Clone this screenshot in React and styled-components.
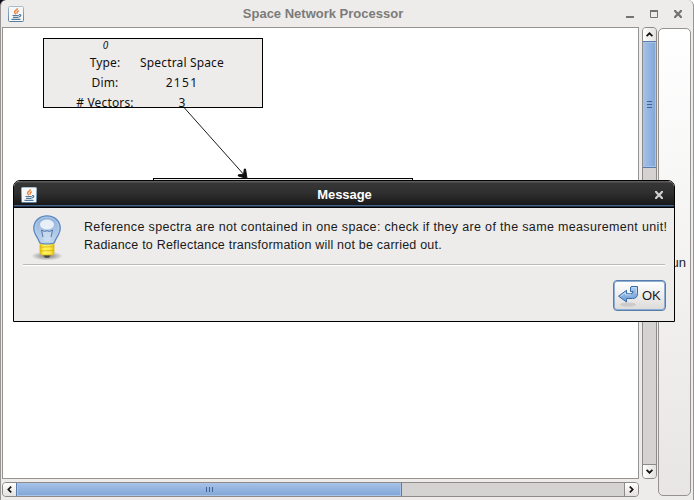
import React from 'react';
import styled, { createGlobalStyle } from 'styled-components';

const GlobalStyle = createGlobalStyle`
  * { box-sizing: border-box; }
  html, body { margin: 0; height: 100%; overflow: hidden; background: linear-gradient(90deg, #0b0e18 50%, #fff 50%); }
  svg { display: block; flex: none; }
`;

const Window = styled.div`
  position: relative;
  width: 694px;
  height: 500px;
  overflow: hidden;
  display: flex;
  flex-direction: column;
  background: #edeceb;
  border: solid #989694;
  border-width: 0 1px;
  border-radius: 6px 6px 0 0;
  font-family: 'Liberation Sans', Arial, sans-serif;
  color: #1a1a1a;
`;

const TitleBar = styled.header`
  display: grid;
  grid-template-columns: 56px 1fr 104px;
  align-items: center;
  height: 27px;
  flex: none;
  padding: 1px 7px 0;
`;

const Title = styled.h1`
  margin: 0;
  text-align: center;
  white-space: nowrap;
  font-size: 13px;
  line-height: 16px;
  font-weight: 700;
  letter-spacing: ${(p) => (p.$light ? '-0.05px' : '0')};
  color: ${(p) => (p.$light ? '#fff' : '#7c7b79')};
`;

const WindowControls = styled.div`
  display: flex;
  justify-content: flex-end;
  align-items: center;
  gap: 16px;
  padding-right: 4px;
`;

const Workspace = styled.div`
  display: grid;
  grid-template-columns: 637px 18px 33px;
  grid-template-rows: 452px 15px;
  row-gap: 3px;
  padding-left: 1px;
  flex: none;
`;

const Canvas = styled.main`
  position: relative;
  border: 1px solid #979491;
  background: #fff;
  overflow: hidden;
`;

const Node = styled.div`
  position: absolute;
  left: ${(p) => p.$x}px;
  top: ${(p) => p.$y}px;
  width: ${(p) => p.$w}px;
  height: ${(p) => p.$h}px;
  border: 1px solid #000;
  background: #edeceb;
`;

const NodeGrid = styled.div`
  display: grid;
  grid-template-columns: 58px 86px;
  column-gap: 5px;
  grid-template-rows: 14px 20px 20px 17px;
  padding-left: 32px;
  text-align: center;
  font: 12px/20px 'Noto Sans', sans-serif;
  white-space: nowrap;
  color: #111;
`;

const NodeId = styled.span`
  grid-column: 1 / 3;
  width: 59px;
  font: italic 10px/12px 'Noto Sans', sans-serif;
`;

const Value = styled.span`
  letter-spacing: ${(p) => (p.$wide ? '1.3px' : '0.15px')};
`;

const Connector = styled.svg`
  position: absolute;
  left: 177px;
  top: 78px;
`;

const ScrollTrack = styled.div`
  display: flex;
  flex-direction: ${(p) => (p.$vertical ? 'column' : 'row')};
  width: ${(p) => (p.$vertical ? '15px' : '637px')};
  height: ${(p) => (p.$vertical ? '452px' : '15px')};
  border: 1px solid #8e8a87;
  border-radius: 4px;
  background: #d4d3d1;
  overflow: hidden;
  justify-content: space-between;
`;

const VerticalSlot = styled.div`
  margin-left: 3px;
`;

const ScrollButton = styled.div`
  width: 13px;
  height: 13px;
  flex: none;
  display: grid;
  place-items: center;
  background: linear-gradient(${(p) => (p.$vertical ? '90deg' : '180deg')}, #fff, #e3e1df);
  box-shadow: 0 0 0 1px #8e8a87;
`;

const Thumb = styled.div`
  position: relative;
  display: grid;
  place-items: center;
  flex: none;
  width: ${(p) => (p.$vertical ? '15px' : '386px')};
  height: ${(p) => (p.$vertical ? '127px' : '15px')};
  margin: ${(p) => (p.$vertical ? '0 -1px auto' : '-1px auto -1px 0')};
  border: 1px solid #587baa;
  box-shadow: inset 0 0 0 1px #a9c4e8;
  background: linear-gradient(${(p) => (p.$vertical ? '90deg' : '180deg')}, #a5c1e8, #80a6d6);
`;

const RunButton = styled.button`
  grid-row: 1 / 3;
  grid-column: 3;
  width: 33px;
  height: 468px;
  margin: 1px 0 0 1px;
  padding: 0 4px 0 0;
  display: flex;
  align-items: center;
  justify-content: flex-end;
  border: 1px solid #96928f;
  border-radius: 5px;
  background: linear-gradient(#fff, #e8e6e4);
  font: 13px 'Liberation Sans', sans-serif;
  color: #1a1a1a;
`;

const Dialog = styled.section`
  position: absolute;
  left: 12px;
  top: 180px;
  width: 662px;
  height: 142px;
  border: 1px solid #000;
  border-radius: 7px 7px 0 0;
  background: #edeceb;
  overflow: hidden;
`;

const DialogTitleBar = styled.header`
  display: grid;
  grid-template-columns: 60px 1fr 55px;
  align-items: center;
  height: 27px;
  padding: 1px 11px 0 7px;
  background: linear-gradient(#5b5b5a 0 1px, #363636 2px, #2f2f2f 12px, #191919 24px, #44618c 24px 25px, #000 26px);
`;

const CloseSlot = styled.div`
  display: flex;
  justify-content: flex-end;
`;

const DialogContent = styled.div`
  display: flex;
  height: 57px;
  margin: 0 9px;
  border-bottom: 1px solid #bcbab8;
  box-shadow: 0 1px #fff;
`;

const BulbSlot = styled.div`
  width: 61px;
  padding: 7px 0 0 7px;
  flex: none;
`;

const Message = styled.p`
  margin: 0;
  padding-top: 10px;
  font-size: 12.5px;
  line-height: 18px;
  white-space: nowrap;
`;

const Line = styled.span`
  display: block;
  letter-spacing: ${(p) => p.$spacing};
`;

const Actions = styled.footer`
  display: flex;
  justify-content: flex-end;
  padding: 15px 8px 0 0;
`;

const OkButton = styled.button`
  display: flex;
  align-items: center;
  gap: 3px;
  width: 53px;
  height: 31px;
  padding: 0 3px;
  border: 1px solid #587ead;
  border-radius: 4px;
  box-shadow: inset 0 0 0 1px #8fadd3;
  background: linear-gradient(#fff, #dddbd9);
  font: 13px 'Liberation Sans', sans-serif;
  letter-spacing: -0.2px;
  color: #1a1a1a;
`;

function JavaIcon() {
  return (
    <svg width="16" height="16" viewBox="0 0 16 16">
      <defs>
        <linearGradient id="java" x2="0" y2="1">
          <stop stopColor="#a9bdcc" />
          <stop offset="1" stopColor="#587fa3" />
        </linearGradient>
      </defs>
      <rect x=".5" y=".5" width="15" height="15" rx="1" fill="#f5f7f9" stroke="url(#java)" />
      <path d="M9.500 2.200C9.500 4 6 4.500 6.500 6.500l1.300 1.800M10.800 4.600C8.500 5.800 8.700 6.600 9.300 7.800" fill="none" stroke="#ed8740" strokeWidth="1.400" />
      <path d="M4.500 9.500h6.300M5 11.300h5.500M11 8.600c2.600-.4 2.300 2-.3 2.400M3.500 13.400h9" fill="none" stroke="#53799b" strokeWidth="1.200" />
    </svg>
  );
}

function CloseIcon({ color }) {
  return (
    <svg width="8" height="8" viewBox="0 0 8 8">
      <path d="M1 1l6 6M7 1L1 7" stroke={color} strokeWidth="2.3" />
      <path d="M0 .8h2M6 .8h2M0 7.200h2M6 7.200h2" stroke={color} strokeWidth="1.400" />
    </svg>
  );
}

function Arrow({ angle }) {
  return (
    <svg width="9" height="9" viewBox="0 0 9 9">
      <path transform={`rotate(${angle} 4.5 4.5)`} d="M1.6 6.2L4.5 3.3l2.9 2.9" fill="none" stroke="#111" strokeWidth="1.7" />
    </svg>
  );
}

function Grip({ vertical }) {
  return (
    <svg width={vertical ? 5 : 7} height={vertical ? 7 : 5} shapeRendering="crispEdges">
      <path
        d={vertical ? 'M0 .5h5M0 3.5h5M0 6.5h5' : 'M.5 0v5M3.5 0v5M6.5 0v5'}
        stroke="#3e6399"
      />
    </svg>
  );
}

function Bulb() {
  return (
    <svg width="34" height="46" viewBox="0 0 34 46">
      <defs>
        <linearGradient id="glass" x2="0" y2="1">
          <stop stopColor="#8eafd9" />
          <stop offset="1" stopColor="#c4d8f0" />
        </linearGradient>
        <linearGradient id="brass">
          <stop stopColor="#e7c214" />
          <stop offset=".3" stopColor="#fff45e" />
          <stop offset=".7" stopColor="#fce94f" />
          <stop offset="1" stopColor="#e9c30f" />
        </linearGradient>
        <radialGradient id="shade">
          <stop stopColor="#000" stopOpacity=".5" />
          <stop offset="1" stopColor="#000" stopOpacity="0" />
        </radialGradient>
      </defs>
      <ellipse cx="17" cy="41" rx="16" ry="4.500" fill="url(#shade)" />
      <path d="M13 39.500h8l-2 3.200h-4z" fill="#454846" />
      <path d="M10 28h14v10l-2 2H12l-2-2z" fill="url(#brass)" stroke="#dcb60a" strokeWidth=".8" />
      <path d="M10 32.200l14-.6M10 36l14-.6" stroke="#d2ac08" strokeWidth=".7" />
      <path d="M17 .8C9.500.8 3.800 6 3.800 13.400c0 5.600 4.200 9 5.700 14 1.500 2 13.500 2 15 0 1.500-5 5.700-8.400 5.700-14C30.200 6 24.500.8 17 .8z" fill="url(#glass)" stroke="#5d89c2" strokeWidth="1.300" />
      <path d="M17 2.200C10.300 2.200 5.300 6.900 5.300 13.400c0 4.900 3.900 8.100 5.400 13 1.500 1.300 11.100 1.300 12.600 0 1.500-4.900 5.400-8.100 5.400-13C28.700 6.900 23.700 2.200 17 2.200z" fill="none" stroke="#b6cee9" strokeWidth=".8" />
      <path d="M14 26.500l-2.200-11.500 3 1.500 2.200-.8 2.200.8 3-1.500L20 26.500" fill="#d3e2f4" fillOpacity=".6" />
      <path d="M13 22l-1.500-7 3 1.500 2.500-.8 2.500.8 3-1.500L21 22" fill="none" stroke="#5578a8" />
      <ellipse cx="17" cy="9.500" rx="7" ry="5" fill="#f4f8fc" fillOpacity=".85" />
    </svg>
  );
}

function EnterIcon() {
  return (
    <svg width="22" height="22" viewBox="0 0 22 22">
      <defs>
        <linearGradient id="enter" x2="0" y2="1">
          <stop stopColor="#a9c9ed" />
          <stop offset="1" stopColor="#6f9fd6" />
        </linearGradient>
      </defs>
      <ellipse cx="11" cy="19.500" rx="8" ry="2" fill="#000" opacity=".1" />
      <path d="M13.500 3q0-1.500 1.500-1.500h5.500v7q0 5-5 5H9.500v3.500L1.500 11.200l8-5.900v3.500h4q2.500 0 2.500-2.300h-2.500z" fill="url(#enter)" stroke="#386aa8" strokeLinejoin="round" />
      <path d="M14.800 2.700h4.500v5.500M3.500 11.200l5-3.700v2.300h5.500" fill="none" stroke="#d3e4f6" strokeWidth=".8" />
    </svg>
  );
}

export default function App() {
  return (
    <>
      <GlobalStyle />
      <Window>
        <TitleBar>
          <JavaIcon />
          <Title>Space Network Processor</Title>
          <WindowControls>
            <svg width="8" height="8"><path d="M0 7h8" stroke="#747371" strokeWidth="2" /></svg>
            <svg width="8" height="8"><path d="M.5 1v6.500h7V1" fill="none" stroke="#747371" /><path d="M0 1h8" stroke="#747371" strokeWidth="2" /></svg>
            <CloseIcon color="#747371" />
          </WindowControls>
        </TitleBar>
        <Workspace>
          <Canvas>
            <Node $x={40} $y={10} $w={220} $h={70}>
              <NodeGrid>
                <NodeId>0</NodeId>
                <Value>Type:</Value><Value>Spectral Space</Value>
                <Value>Dim:</Value><Value $wide>2151</Value>
                <Value># Vectors:</Value><Value>3</Value>
              </NodeGrid>
            </Node>
            <Node $x={150} $y={150} $w={260} $h={70} />
            <Connector width="70" height="74">
              <path d="M4.500 2L66 71" stroke="#000" strokeWidth=".9" />
              <path d="M67 72.500L65.500 63h-1.200l-.7 5.500-5.300.3v1.200z" fill="#111" stroke="#111" />
            </Connector>
          </Canvas>
          <VerticalSlot>
            <ScrollTrack $vertical>
              <ScrollButton $vertical><Arrow angle={0} /></ScrollButton>
              <Thumb $vertical><Grip vertical /></Thumb>
              <ScrollButton $vertical><Arrow angle={180} /></ScrollButton>
            </ScrollTrack>
          </VerticalSlot>
          <RunButton>Run</RunButton>
          <ScrollTrack>
            <ScrollButton><Arrow angle={-90} /></ScrollButton>
            <Thumb><Grip /></Thumb>
            <ScrollButton><Arrow angle={90} /></ScrollButton>
          </ScrollTrack>
        </Workspace>
        <Dialog>
          <DialogTitleBar>
            <JavaIcon />
            <Title $light>Message</Title>
            <CloseSlot><CloseIcon color="#d0d0cf" /></CloseSlot>
          </DialogTitleBar>
          <DialogContent>
            <BulbSlot><Bulb /></BulbSlot>
            <Message>
              <Line $spacing="0.34px">Reference spectra are not contained in one space: check if they are of the same measurement unit!</Line>
              <Line $spacing="0.21px">Radiance to Reflectance transformation will not be carried out.</Line>
            </Message>
          </DialogContent>
          <Actions>
            <OkButton><EnterIcon />OK</OkButton>
          </Actions>
        </Dialog>
      </Window>
    </>
  );
}
